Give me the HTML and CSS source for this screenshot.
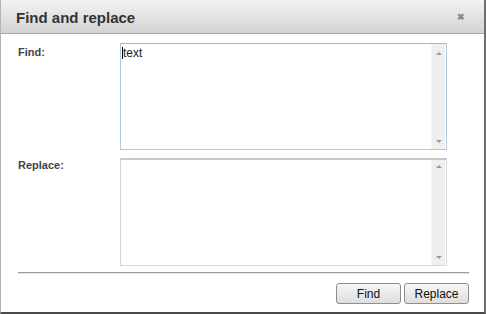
FILE: index.html
```html
<!DOCTYPE html>
<html lang="en">
<head>
    <meta charset="UTF-8">
    <title>Find and replace</title>
    <link rel="stylesheet" href="styles.css">
</head>
<body>
    <div class="dialog">
        <div class="head">
            <span class="caption">Find and replace</span>
            <span class="close">&#10006;</span>
        </div>
        <div class="content">
            <div class="row">
                <label class="label">Find:</label>
                <div class="field focus">
                    <div class="text"><span class="caret"></span>text</div>
                    <div class="scroll"><span class="up"></span><span class="down"></span></div>
                </div>
            </div>
            <div class="row">
                <label class="label second">Replace:</label>
                <div class="field tall">
                    <div class="text"></div>
                    <div class="scroll"><span class="up"></span><span class="down"></span></div>
                </div>
            </div>
            <div class="line"></div>
            <div class="buttons">
                <button class="btn find">Find</button>
                <button class="btn">Replace</button>
            </div>
        </div>
    </div>
</body>
</html>
```

FILE: styles.css
```css
html, body{
    margin: 0;
    padding: 0;
    background: #fff;
}
body{
    font-family: "Liberation Sans", Arial, sans-serif;
}
.dialog{
    width: 483px;
    height: 312px;
    border-left: 1px solid #b4b4b4;
    border-right: 2px solid #6e6e6e;
    border-bottom: 2px solid #4a4a4a;
    display: flex;
    flex-direction: column;
}
.head{
    height: 33px;
    border-bottom: 1px solid #a9a9a9;
    background: linear-gradient(#f3f3f3, #d3d3d3);
    display: flex;
    align-items: center;
    justify-content: space-between;
    padding: 0 19px 0 15px;
}
.caption{
    font-size: 15px;
    font-weight: bold;
    color: #333;
    padding-top: 1px;
}
.close{
    font-size: 9px;
    color: #8a8a8a;
    font-weight: bold;
}
.content{
    padding: 9px 16px 0 17px;
}
.row{
    display: flex;
    margin-bottom: 8px;
}
.label{
    width: 102px;
    font-size: 11px;
    font-weight: bold;
    color: #444;
    padding-top: 3px;
}
.label.second{
    padding-top: 1px;
}
.field{
    width: 325px;
    height: 105px;
    border: 1px solid #d6d6de;
    border-top-color: #bdbdbd;
    display: flex;
}
.field.focus{
    border-color: #a9c9e6;
    border-top-color: #93b8dc;
}
.field.tall{
    height: 105px;
    border-top: 2px solid #c8c8c8;
}
.text{
    flex: 1;
    font-size: 12px;
    color: #222;
    padding: 2px 1px;
    line-height: 14px;
}
.caret{
    display: inline-block;
    width: 1px;
    height: 12px;
    background: #000;
    vertical-align: -2px;
}
.scroll{
    width: 13px;
    margin-right: 1px;
    background: #efefef;
    border-left: 1px solid #f6f6f6;
    display: flex;
    flex-direction: column;
    justify-content: space-between;
    align-items: center;
    padding: 8px 0 6px;
}
.tall .scroll{
    padding-top: 5px;
}
.up{
    width: 0;
    height: 0;
    border-left: 3px solid transparent;
    border-right: 3px solid transparent;
    border-bottom: 3px solid #9a9a9a;
}
.down{
    width: 0;
    height: 0;
    border-left: 3px solid transparent;
    border-right: 3px solid transparent;
    border-top: 3px solid #9a9a9a;
}
.line{
    height: 1px;
    background: #9a9a9a;
    border-bottom: 1px solid #e6e6e6;
    margin: -2px 0 0 0;
    width: 451px;
}
.buttons{
    display: flex;
    justify-content: flex-end;
    gap: 3px;
    margin-top: 9px;
    width: 451px;
}
.btn{
    width: 65px;
    height: 21px;
    font-family: "Liberation Sans", Arial, sans-serif;
    font-size: 12px;
    color: #111;
    border: 1px solid #8e8e8e;
    border-radius: 3px;
    background: linear-gradient(#f6f6f6, #dedede);
    padding: 0;
}
```
